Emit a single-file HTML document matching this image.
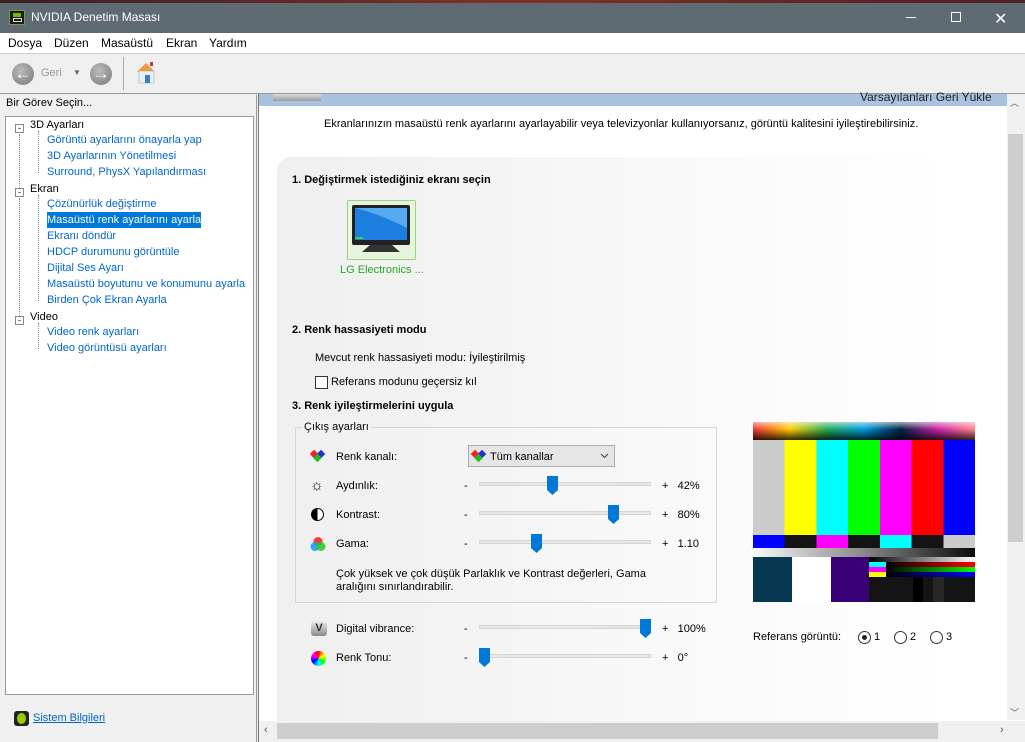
<!DOCTYPE html>
<html><head><meta charset="utf-8"><style>
*{margin:0;padding:0;box-sizing:border-box}
body{width:1025px;height:742px;overflow:hidden;font-family:"Liberation Sans",sans-serif;font-size:11px;color:#000;background:#f0f0f0;position:relative}
.a{position:absolute}
.tree div{position:absolute;white-space:nowrap;font-size:11px}
.lk{color:#0066cc}
.lbl{position:absolute;font-size:11px}
.track{position:absolute;left:479px;width:172px;height:4px;background:#e7e7e7;border:1px solid #d6d6d6}
.thumb{position:absolute;width:11px;height:19px}
</style></head><body>
<div class="a" style="left:0;top:0;width:1025px;height:3px;background:linear-gradient(90deg,#3a2020,#803028 50%,#502020)"></div>
<div class="a" style="left:0;top:3px;width:1025px;height:30px;background:#5f6b72"></div>
<div class="a" style="left:9px;top:10px;width:16px;height:15px;background:#1a1a1a;border:1px solid #7a9a40"><div class="a" style="left:3px;top:2px;width:8px;height:4px;background:#76b900"></div><div class="a" style="left:3px;top:7px;width:9px;height:4px;border:1px solid #ddd"></div></div>
<div class="a" style="left:31px;top:10px;color:#fff;font-size:12px">NVIDIA Denetim Masası</div>
<div class="a" style="left:906px;top:17px;width:10px;height:1px;background:#fff"></div>
<div class="a" style="left:951px;top:12px;width:10px;height:10px;border:1px solid #fff"></div>
<div class="a" style="left:994px;top:9px;color:#fff;font-size:16px">✕</div>
<div class="a" style="left:0;top:33px;width:1025px;height:20px;background:#fff"></div>
<div class="a" style="left:8px;top:36px;font-size:12px">Dosya</div>
<div class="a" style="left:54px;top:36px;font-size:12px">Düzen</div>
<div class="a" style="left:101px;top:36px;font-size:12px">Masaüstü</div>
<div class="a" style="left:166px;top:36px;font-size:12px">Ekran</div>
<div class="a" style="left:209px;top:36px;font-size:12px">Yardım</div>
<div class="a" style="left:0;top:53px;width:1025px;height:41px;background:#efefef;border-top:1px solid #ccc;border-bottom:1px solid #999"></div>
<div class="a" style="left:12px;top:63px;width:22px;height:22px;border-radius:50%;background:radial-gradient(circle at 40% 35%,#bbb,#777);color:#fff;font-size:17px;line-height:22px;text-align:center;font-weight:bold">←</div>
<div class="a" style="left:41px;top:67px;color:#999;font-size:11px">Geri</div>
<div class="a" style="left:73px;top:68px;color:#666;font-size:8px">▼</div>
<div class="a" style="left:90px;top:63px;width:22px;height:22px;border-radius:50%;background:radial-gradient(circle at 40% 35%,#bbb,#777);color:#fff;font-size:17px;line-height:22px;text-align:center;font-weight:bold">→</div>
<div class="a" style="left:123px;top:57px;width:1px;height:33px;background:#aaa"></div>
<svg class="a" style="left:133px;top:60px" width="26" height="26"><polygon points="4,12 13,3 22,12" fill="#f59a3a"/><rect x="6" y="11" width="15" height="12" fill="#e8eef5" stroke="#8aa" stroke-width=".5"/><rect x="12" y="15" width="5" height="8" fill="#3a7ad0"/><rect x="17" y="2" width="3" height="4" fill="#c33"/></svg>
<div class="a" style="left:0;top:95px;width:257px;height:647px;background:#f0f0f0;border-right:1px solid #999"></div>
<div class="a" style="left:6px;top:97px;font-size:11px">Bir Görev Seçin...</div>
<div class="a" style="left:5px;top:116px;width:249px;height:579px;background:#fff;border:1px solid #999"></div>
<div class="tree">
<div style="left:15px;top:124px;width:9px;height:9px;border:1px solid #888;font-size:9px;line-height:7px;text-align:center">-</div>
<div style="left:15px;top:188px;width:9px;height:9px;border:1px solid #888;font-size:9px;line-height:7px;text-align:center">-</div>
<div style="left:15px;top:316px;width:9px;height:9px;border:1px solid #888;font-size:9px;line-height:7px;text-align:center">-</div>
<div style="left:19px;top:134px;height:54px;border-left:1px dotted #888"></div>
<div style="left:19px;top:198px;height:118px;border-left:1px dotted #888"></div>
<div style="left:38px;top:131px;height:42px;border-left:1px dotted #888"></div>
<div style="left:38px;top:195px;height:106px;border-left:1px dotted #888"></div>
<div style="left:38px;top:323px;height:26px;border-left:1px dotted #888"></div>
<div style="left:30px;top:119px">3D Ayarları</div>
<div class="lk" style="left:47px;top:134px">Görüntü ayarlarını önayarla yap</div>
<div class="lk" style="left:47px;top:150px">3D Ayarlarının Yönetilmesi</div>
<div class="lk" style="left:47px;top:166px">Surround, PhysX Yapılandırması</div>
<div style="left:30px;top:183px">Ekran</div>
<div class="lk" style="left:47px;top:198px">Çözünürlük değiştirme</div>
<div style="left:47px;top:212px;width:154px;height:16px;background:#0078d7;color:#fff;padding-top:2px">Masaüstü renk ayarlarını ayarla</div>
<div class="lk" style="left:47px;top:230px">Ekranı döndür</div>
<div class="lk" style="left:47px;top:246px">HDCP durumunu görüntüle</div>
<div class="lk" style="left:47px;top:262px">Dijital Ses Ayarı</div>
<div class="lk" style="left:47px;top:278px">Masaüstü boyutunu ve konumunu ayarla</div>
<div class="lk" style="left:47px;top:294px">Birden Çok Ekran Ayarla</div>
<div style="left:30px;top:311px">Video</div>
<div class="lk" style="left:47px;top:326px">Video renk ayarları</div>
<div class="lk" style="left:47px;top:342px">Video görüntüsü ayarları</div>
</div>
<div class="a" style="left:14px;top:711px;width:15px;height:15px;background:#222;border-radius:3px"><div class="a" style="left:3px;top:2px;width:9px;height:11px;border-radius:50%;background:#9c0"></div></div>
<div class="a lk" style="left:33px;top:712px;text-decoration:underline;font-size:11px">Sistem Bilgileri</div>
<div class="a" style="left:258px;top:94px;width:767px;height:648px;background:#fff;border-left:1px solid #777"></div>
<div class="a" style="left:259px;top:94px;width:748px;height:12px;background:#a8c2df"></div>
<div class="a" style="left:273px;top:94px;width:48px;height:7px;background:linear-gradient(#ddd,#999)"></div>
<div class="a" style="left:860px;top:90px;font-size:12px;color:#222">Varsayılanları Geri Yükle</div>
<div class="a" style="left:324px;top:118px;font-size:11px">Ekranlarınızın masaüstü renk ayarlarını ayarlayabilir veya televizyonlar kullanıyorsanız, görüntü kalitesini iyileştirebilirsiniz.</div>
<div class="a" style="left:1007px;top:94px;width:18px;height:626px;background:#f0f0f0"></div>
<div class="a" style="left:1008px;top:134px;width:15px;height:408px;background:#cdcdcd"></div>
<div class="a" style="left:1010px;top:96px;font-size:9px;color:#555">︿</div>
<div class="a" style="left:1010px;top:706px;font-size:9px;color:#555">﹀</div>
<div class="a" style="left:259px;top:721px;width:766px;height:21px;background:#f0f0f0"></div>
<div class="a" style="left:277px;top:723px;width:661px;height:16px;background:#cdcdcd"></div>
<div class="a" style="left:264px;top:724px;font-size:11px;color:#555">‹</div>
<div class="a" style="left:1000px;top:724px;font-size:11px;color:#555">›</div>
<div class="a" style="left:277px;top:157px;width:730px;height:564px;background:linear-gradient(90deg,#efefef,#f6f6f6 40%,#fafafa 60%,#fff 92%);border-radius:14px 0 0 0"></div>
<div class="a" style="left:292px;top:174px;font-weight:bold;font-size:11px">1. Değiştirmek istediğiniz ekranı seçin</div>
<div class="a" style="left:347px;top:200px;width:69px;height:60px;background:#e6f5dc;border:1px solid #9bd480;border-radius:2px"></div>
<svg class="a" style="left:350px;top:204px" width="62" height="52"><rect x="2" y="1" width="58" height="40" rx="2" fill="#222"/><rect x="5" y="4" width="52" height="32" fill="#1c7fe0"/><path d="M5 4 H57 V24 Q30 10 5 4Z" fill="#55aaf0"/><rect x="5" y="33" width="8" height="2" fill="#4c4"/><path d="M20 41 H42 L50 48 H12Z" fill="#333"/></svg>
<div class="a" style="left:340px;top:264px;color:#22aa22;font-size:11px">LG Electronics ...</div>
<div class="a" style="left:292px;top:324px;font-weight:bold">2. Renk hassasiyeti modu</div>
<div class="a" style="left:315px;top:352px">Mevcut renk hassasiyeti modu: İyileştirilmiş</div>
<div class="a" style="left:315px;top:376px;width:13px;height:13px;border:1px solid #333;background:#fff"></div>
<div class="a" style="left:331px;top:376px">Referans modunu geçersiz kıl</div>
<div class="a" style="left:292px;top:400px;font-weight:bold">3. Renk iyileştirmelerini uygula</div>
<div class="a" style="left:295px;top:427px;width:422px;height:176px;border:1px solid #d5d5d5"></div>
<div class="a" style="left:302px;top:421px;background:#f2f2f2;padding:0 2px">Çıkış ayarları</div>
<svg class="a" style="left:310px;top:449px" width="16" height="14"><rect x="1" y="2" width="6" height="6" transform="rotate(45 4 5)" fill="#e22"/><rect x="8" y="2" width="6" height="6" transform="rotate(45 11 5)" fill="#23c"/><rect x="4.5" y="6" width="6" height="6" transform="rotate(45 7.5 9)" fill="#2b2"/></svg>
<div class="lbl" style="left:336px;top:451px">Renk kanalı:</div>
<div class="a" style="left:468px;top:445px;width:147px;height:22px;background:#e5e5e5;border:1px solid #adadad"></div>
<svg class="a" style="left:471px;top:449px" width="16" height="14"><rect x="1" y="2" width="6" height="6" transform="rotate(45 4 5)" fill="#e22"/><rect x="8" y="2" width="6" height="6" transform="rotate(45 11 5)" fill="#23c"/><rect x="4.5" y="6" width="6" height="6" transform="rotate(45 7.5 9)" fill="#2b2"/></svg>
<div class="lbl" style="left:490px;top:451px">Tüm kanallar</div>
<svg class="a" style="left:600px;top:453px" width="9" height="6"><path d="M1 1 L4.5 4.5 L8 1" stroke="#444" fill="none"/></svg>
<div class="a" style="left:310px;top:478px;font-size:15px;line-height:15px">☼</div>
<div class="lbl" style="left:336px;top:480px">Aydınlık:</div>
<div class="lbl" style="left:464px;top:480px">-</div>
<div class="track" style="top:482px"></div>
<svg class="thumb" style="left:547px;top:476px" width="11" height="19"><path d="M0 0H11V14L5.5 19L0 14Z" fill="#0078d7"/></svg>
<div class="lbl" style="left:662px;top:480px">+&nbsp;&nbsp; 42%</div>
<div class="a" style="left:311px;top:508px;width:13px;height:13px;border-radius:50%;border:1.5px solid #000;background:linear-gradient(90deg,#000 50%,#fff 50%)"></div>
<div class="lbl" style="left:336px;top:509px">Kontrast:</div>
<div class="lbl" style="left:464px;top:509px">-</div>
<div class="track" style="top:511px"></div>
<svg class="thumb" style="left:608px;top:505px" width="11" height="19"><path d="M0 0H11V14L5.5 19L0 14Z" fill="#0078d7"/></svg>
<div class="lbl" style="left:662px;top:509px">+&nbsp;&nbsp; 80%</div>
<svg class="a" style="left:310px;top:536px" width="16" height="16"><circle cx="8" cy="5.5" r="4.5" fill="#f22" opacity=".9"/><circle cx="5" cy="10.5" r="4.5" fill="#1a9ff0" opacity=".9"/><circle cx="11" cy="10.5" r="4.5" fill="#2c2" opacity=".85"/></svg>
<div class="lbl" style="left:336px;top:538px">Gama:</div>
<div class="lbl" style="left:464px;top:538px">-</div>
<div class="track" style="top:540px"></div>
<svg class="thumb" style="left:531px;top:534px" width="11" height="19"><path d="M0 0H11V14L5.5 19L0 14Z" fill="#0078d7"/></svg>
<div class="lbl" style="left:662px;top:538px">+&nbsp;&nbsp; 1.10</div>
<div class="lbl" style="left:336px;top:568px;line-height:13px">Çok yüksek ve çok düşük Parlaklık ve Kontrast değerleri, Gama<br>aralığını sınırlandırabilir.</div>
<div class="a" style="left:311px;top:621px;width:16px;height:15px;border-radius:3px;background:linear-gradient(#eee,#888);font-weight:bold;font-size:11px;text-align:center;line-height:15px;color:#333">V</div>
<div class="lbl" style="left:336px;top:623px">Digital vibrance:</div>
<div class="lbl" style="left:464px;top:623px">-</div>
<div class="track" style="top:625px"></div>
<svg class="thumb" style="left:640px;top:619px" width="11" height="19"><path d="M0 0H11V14L5.5 19L0 14Z" fill="#0078d7"/></svg>
<div class="lbl" style="left:662px;top:623px">+&nbsp;&nbsp; 100%</div>
<div class="a" style="left:311px;top:651px;width:15px;height:15px;border-radius:50%;background:conic-gradient(red,yellow,lime,cyan,blue,magenta,red)"></div>
<div class="lbl" style="left:336px;top:652px">Renk Tonu:</div>
<div class="lbl" style="left:464px;top:652px">-</div>
<div class="track" style="top:654px"></div>
<svg class="thumb" style="left:479px;top:648px" width="11" height="19"><path d="M0 0H11V14L5.5 19L0 14Z" fill="#0078d7"/></svg>
<div class="lbl" style="left:662px;top:652px">+&nbsp;&nbsp; 0°</div>
<div class="a" style="left:753px;top:422px;width:222px;height:180px;background:#141414"></div>
<div class="a" style="left:753px;top:422px;width:222px;height:18px;background:linear-gradient(90deg,#e33,#fc0,#2a5,#09d,#024,#c2a,#f88),#000"></div>
<div class="a" style="left:753px;top:422px;width:222px;height:18px;background:linear-gradient(rgba(255,255,255,.6),rgba(0,0,0,0) 40%,rgba(0,0,0,.8))"></div>
<div class="a" style="left:753px;top:440px;width:222px;height:95px;background:linear-gradient(90deg,#ccc 0 14.3%,#ff0 14.3% 28.6%,#0ff 28.6% 42.9%,#0f0 42.9% 57.1%,#f0f 57.1% 71.4%,#f00 71.4% 85.7%,#00f 85.7%)"></div>
<div class="a" style="left:753px;top:535px;width:222px;height:13px;background:linear-gradient(90deg,#00f 0 14.3%,#141414 14.3% 28.6%,#f0f 28.6% 42.9%,#141414 42.9% 57.1%,#0ff 57.1% 71.4%,#141414 71.4% 85.7%,#ccc 85.7%)"></div>
<div class="a" style="left:753px;top:548px;width:222px;height:9px;background:linear-gradient(90deg,#fafafa,#888 50%,#0a0a0a)"></div>
<div class="a" style="left:753px;top:557px;width:39px;height:45px;background:#073852"></div>
<div class="a" style="left:792px;top:557px;width:39px;height:45px;background:#fff"></div>
<div class="a" style="left:831px;top:557px;width:38px;height:45px;background:#3a0078"></div>
<div class="a" style="left:869px;top:557px;width:106px;height:5px;background:linear-gradient(90deg,#000,#fff)"></div>
<div class="a" style="left:869px;top:562px;width:17px;height:5px;background:#0ff"></div>
<div class="a" style="left:869px;top:567px;width:17px;height:5px;background:#f0f"></div>
<div class="a" style="left:869px;top:572px;width:17px;height:5px;background:#ff0"></div>
<div class="a" style="left:886px;top:562px;width:89px;height:5px;background:linear-gradient(90deg,#000,#f00)"></div>
<div class="a" style="left:886px;top:567px;width:89px;height:5px;background:linear-gradient(90deg,#000,#0f0)"></div>
<div class="a" style="left:886px;top:572px;width:89px;height:5px;background:linear-gradient(90deg,#000,#00f)"></div>
<div class="a" style="left:913px;top:577px;width:10px;height:25px;background:#000"></div>
<div class="a" style="left:933px;top:577px;width:11px;height:25px;background:#272727"></div>
<div class="lbl" style="left:753px;top:631px">Referans görüntü:</div>
<div class="a" style="left:858px;top:631px;width:13px;height:13px;border-radius:50%;border:1px solid #333;background:#fff"><div class="a" style="left:3px;top:3px;width:5px;height:5px;border-radius:50%;background:#222"></div></div>
<div class="lbl" style="left:874px;top:631px">1</div>
<div class="a" style="left:894px;top:631px;width:13px;height:13px;border-radius:50%;border:1px solid #333;background:#fff"></div>
<div class="lbl" style="left:910px;top:631px">2</div>
<div class="a" style="left:930px;top:631px;width:13px;height:13px;border-radius:50%;border:1px solid #333;background:#fff"></div>
<div class="lbl" style="left:946px;top:631px">3</div>
</body></html>
